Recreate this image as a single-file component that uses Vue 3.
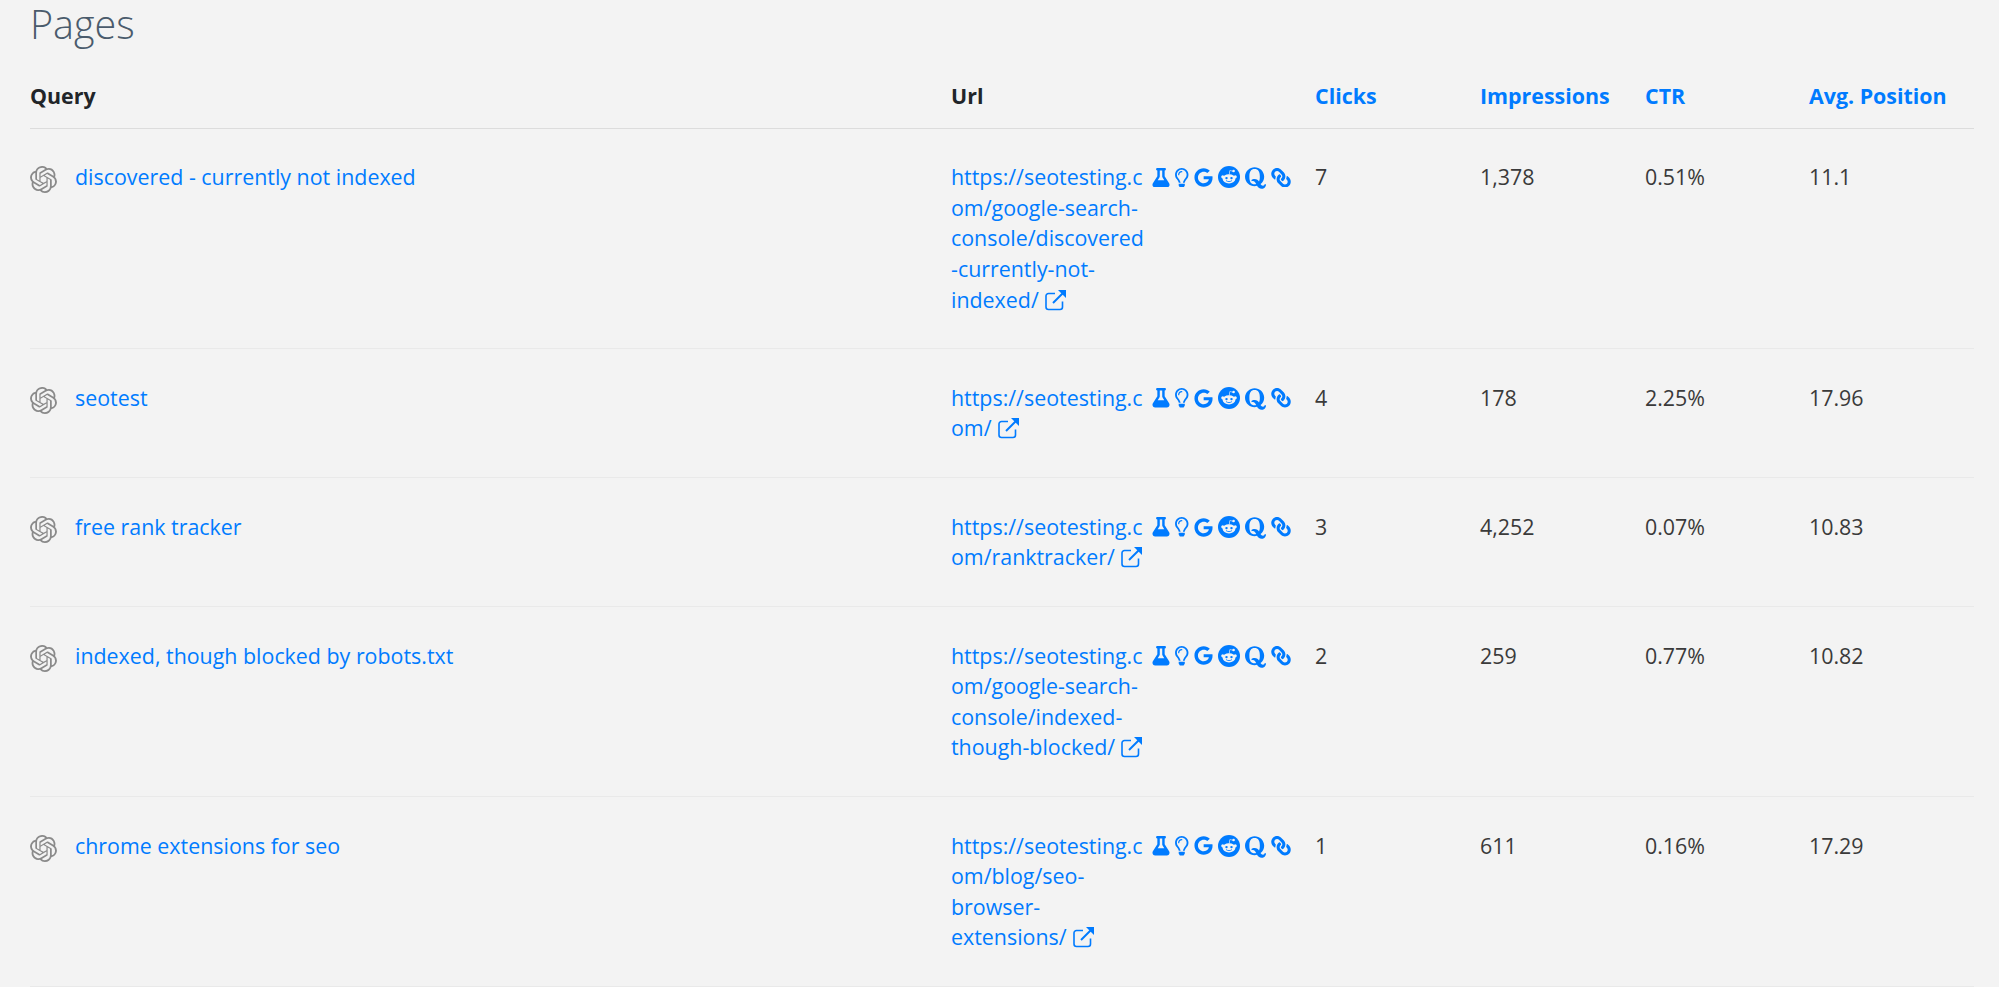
<script setup>
const rows = [
  { query: 'discovered - currently not indexed', url: ['https://seotesting.c', 'om/google-search-', 'console/discovered', '-currently-not-', 'indexed/'], clicks: '7', impressions: '1,378', ctr: '0.51%', pos: '11.1' },
  { query: 'seotest', url: ['https://seotesting.c', 'om/'], clicks: '4', impressions: '178', ctr: '2.25%', pos: '17.96' },
  { query: 'free rank tracker', url: ['https://seotesting.c', 'om/ranktracker/'], clicks: '3', impressions: '4,252', ctr: '0.07%', pos: '10.83' },
  { query: 'indexed, though blocked by robots.txt', url: ['https://seotesting.c', 'om/google-search-', 'console/indexed-', 'though-blocked/'], clicks: '2', impressions: '259', ctr: '0.77%', pos: '10.82' },
  { query: 'chrome extensions for seo', url: ['https://seotesting.c', 'om/blog/seo-', 'browser-', 'extensions/'], clicks: '1', impressions: '611', ctr: '0.16%', pos: '17.29' }
]
</script>

<template>
  <div class="page">
    <h1 class="title">Pages</h1>
    <div class="row head">
      <div>Query</div>
      <div>Url</div>
      <div class="sort">Clicks</div>
      <div class="sort">Impressions</div>
      <div class="sort">CTR</div>
      <div class="sort">Avg. Position</div>
    </div>
    <div v-for="r in rows" :key="r.query" class="row body">
      <div class="query">
        <svg class="ai" viewBox="0 0 24 24"><path fill="#8a8a8a" d="M22.2819 9.8211a5.9847 5.9847 0 0 0-.5157-4.9108 6.0462 6.0462 0 0 0-6.5098-2.9A6.0651 6.0651 0 0 0 4.9807 4.1818a5.9847 5.9847 0 0 0-3.9977 2.9 6.0462 6.0462 0 0 0 .7427 7.0966 5.98 5.98 0 0 0 .511 4.9107 6.051 6.051 0 0 0 6.5146 2.9001A5.9847 5.9847 0 0 0 13.2599 24a6.0557 6.0557 0 0 0 5.7718-4.2058 5.9894 5.9894 0 0 0 3.9977-2.9001 6.0557 6.0557 0 0 0-.7475-7.0729zm-9.022 12.6081a4.4755 4.4755 0 0 1-2.8764-1.0408l.1419-.0804 4.7783-2.7582a.7948.7948 0 0 0 .3927-.6813v-6.7369l2.02 1.1686a.071.071 0 0 1 .038.052v5.5826a4.504 4.504 0 0 1-4.4945 4.4944zm-9.6607-4.1254a4.4708 4.4708 0 0 1-.5346-3.0137l.142.0852 4.783 2.7582a.7712.7712 0 0 0 .7806 0l5.8428-3.3685v2.3324a.0804.0804 0 0 1-.0332.0615L9.74 19.9502a4.4992 4.4992 0 0 1-6.1408-1.6464zM2.3408 7.8956a4.485 4.485 0 0 1 2.3655-1.9728V11.6a.7664.7664 0 0 0 .3879.6765l5.8144 3.3543-2.0201 1.1685a.0757.0757 0 0 1-.071 0l-4.8303-2.7865A4.504 4.504 0 0 1 2.3408 7.872zm16.5963 3.8558L13.1038 8.364 15.1192 7.2a.0757.0757 0 0 1 .071 0l4.8303 2.7913a4.4944 4.4944 0 0 1-.6765 8.1042v-5.6772a.79.79 0 0 0-.407-.667zm2.0107-3.0231l-.142-.0852-4.7735-2.7818a.7759.7759 0 0 0-.7854 0L9.409 9.2297V6.8974a.0662.0662 0 0 1 .0284-.0615l4.8303-2.7866a4.4992 4.4992 0 0 1 6.6802 4.66zM8.3065 12.863l-2.02-1.1638a.0804.0804 0 0 1-.038-.0567V6.0742a4.4992 4.4992 0 0 1 7.3757-3.4537l-.142.0805L8.704 5.459a.7948.7948 0 0 0-.3927.6813zm1.0976-2.3654l2.602-1.4998 2.6069 1.4998v2.9994l-2.5974 1.4997-2.6067-1.4997Z"/></svg>
        <span class="link">{{ r.query }}</span>
      </div>
      <div class="urlcell">
        <div class="url link">
          <span v-for="(l, i) in r.url" :key="i" class="line">{{ l }}<svg v-if="i === r.url.length - 1" class="ext" viewBox="0 0 22 22"><path d="M17.5 12.5V18a2.5 2.5 0 0 1-2.5 2.5H3.5A2.5 2.5 0 0 1 1 18V7a2.5 2.5 0 0 1 2.5-2.5H10" fill="none" stroke="#007bff" stroke-width="1.6"/><path d="M8 14 19 3" fill="none" stroke="#007bff" stroke-width="2"/><path d="M13 1h8v8z" fill="#007bff"/></svg></span>
        </div>
        <div class="tools">
          <svg class="t flask" viewBox="0 0 448 512"><path d="M437.2 403.5L320 215V64h8c13.3 0 24-10.7 24-24V24c0-13.3-10.7-24-24-24H120c-13.3 0-24 10.7-24 24v16c0 13.3 10.7 24 24 24h8v151L10.8 403.5C-18.5 450.6 15.3 512 70.9 512h306.2c55.7 0 89.4-61.5 60.1-108.5zM137.9 320l48.2-77.6c3.7-5.2 5.8-11.6 5.8-18.4V64h64v160c0 6.9 2.2 13.2 5.8 18.4l48.2 77.6h-172z"/></svg>
          <svg class="t bulb" viewBox="0 0 352 512"><path d="M176 80c-52.94 0-96 43.06-96 96 0 8.84 7.16 16 16 16s16-7.16 16-16c0-35.3 28.72-64 64-64 8.84 0 16-7.16 16-16s-7.16-16-16-16zM96.06 459.17c0 3.15.93 6.22 2.68 8.84l24.51 36.84c2.97 4.46 7.97 7.14 13.32 7.14h78.85c5.36 0 10.36-2.68 13.32-7.14l24.51-36.84c1.74-2.62 2.67-5.7 2.68-8.84l.05-43.18H96.02l.04 43.18zM176 0C73.72 0 0 82.97 0 176c0 44.37 16.45 84.85 43.56 115.78 16.64 18.99 42.74 58.8 52.42 92.16v.06h48v-.12c-.01-4.77-.72-9.51-2.15-14.07-5.59-17.81-22.82-64.77-62.17-109.67-20.54-23.43-31.52-53.15-31.61-84.14-.2-73.64 59.67-128 127.95-128 70.58 0 128 57.42 128 128 0 30.97-11.24 60.85-31.65 84.14-39.11 44.61-56.42 91.47-62.1 109.46a47.507 47.507 0 0 0-2.22 14.3v.1h48v-.05c9.68-33.37 35.78-73.18 52.42-92.16C335.55 260.85 352 220.37 352 176 352 78.8 273.2 0 176 0z"/></svg>
          <svg class="t g" viewBox="0 0 488 512"><path d="M488 261.8C488 403.3 391.1 504 248 504 110.8 504 0 393.2 0 256S110.8 8 248 8c66.8 0 123 24.5 166.3 64.9l-67.5 64.9C258.5 52.6 94.3 116.6 94.3 256c0 86.5 69.1 156.6 153.7 156.6 98.2 0 135-70.4 140.8-106.9H248v-85.3h236.1c2.3 12.7 3.9 24.9 3.9 41.4z"/></svg>
          <svg class="t reddit" viewBox="0 0 24 24">
            <circle cx="12" cy="12" r="12"/>
            <g fill="#f3f3f3">
              <ellipse cx="12" cy="14" rx="7" ry="5"/>
              <circle cx="5.2" cy="11.8" r="1.7"/>
              <circle cx="18.8" cy="11.8" r="1.7"/>
              <circle cx="17" cy="5.5" r="1.4"/>
              <path d="M11.7 9.5 12.8 4.6l4 .8-.1.7-3.4-.7-.9 4.1z"/>
            </g>
            <circle cx="9.3" cy="13.2" r="1.3"/>
            <circle cx="14.7" cy="13.2" r="1.3"/>
            <path d="M8.8 15.9c1.8 1.5 4.6 1.5 6.4 0" fill="none" stroke="#007bff" stroke-width=".9"/>
          </svg>
          <svg class="t q" viewBox="7 32 434 448"><path d="M440.5 386.7h-29.3c-1.5 13.5-10.5 30.8-33 30.8-20.5 0-35.3-14.2-49.5-35.8 44.2-34.2 74.7-87.8 74.7-153C403.5 111.2 306.8 32 205 32 105.3 32 7.3 111.7 7.3 228.7c0 134.1 131.3 221.6 249 189C276 451.3 302 480 351.5 480c81.8 0 90.8-75.3 89-93.3zM297 329.2C277.5 300 253.3 277 205.5 277c-30.5 0-54.3 10-69 22.8l12.2 24.3c6.2-3 13-4 19.8-4 35.5 0 53.7 30.8 69.2 61.3-10 3-20.7 4.2-32.7 4.2-75 0-107.5-53-107.5-156.7C97.5 124.5 130 71 205 71c76.2 0 108.7 53.5 108.7 157.7.1 41.8-5.4 75.6-16.7 100.5z"/></svg>
          <svg class="t chain" viewBox="0 0 512 512"><path d="M326.612 185.391c59.747 59.809 58.927 155.698.36 214.59-.11.12-.24.25-.36.37l-67.2 67.2c-59.27 59.27-155.699 59.262-214.96 0-59.27-59.26-59.27-155.7 0-214.96l37.106-37.106c9.84-9.84 26.786-3.3 27.294 10.606.648 17.722 3.826 35.527 9.69 52.721 1.986 5.822.567 12.262-3.783 16.612l-13.087 13.087c-28.026 28.026-28.905 73.66-1.155 101.96 28.024 28.579 74.086 28.749 102.325.51l67.2-67.19c28.191-28.191 28.073-73.757 0-101.83-3.701-3.694-7.429-6.564-10.341-8.569a16.037 16.037 0 0 1-6.947-12.606c-.396-10.567 3.348-21.456 11.698-29.806l21.054-21.055c5.521-5.521 14.182-6.199 20.584-1.731a152.482 152.482 0 0 1 20.522 17.197zM467.547 44.449c-59.261-59.262-155.69-59.27-214.96 0l-67.2 67.2c-.12.12-.25.25-.36.37-58.566 58.892-59.387 154.781.36 214.59a152.454 152.454 0 0 0 20.521 17.196c6.402 4.468 15.064 3.789 20.584-1.731l21.054-21.055c8.35-8.35 12.094-19.239 11.698-29.806a16.037 16.037 0 0 0-6.947-12.606c-2.912-2.005-6.64-4.875-10.341-8.569-28.073-28.073-28.191-73.639 0-101.83l67.2-67.19c28.239-28.239 74.3-28.069 102.325.51 27.75 28.3 26.872 73.934-1.155 101.96l-13.087 13.087c-4.35 4.35-5.769 10.79-3.783 16.612 5.864 17.194 9.042 34.999 9.69 52.721.509 13.906 17.454 20.446 27.294 10.606l37.106-37.106c59.271-59.259 59.271-155.699.001-214.959z"/></svg>
        </div>
      </div>
      <div>{{ r.clicks }}</div>
      <div>{{ r.impressions }}</div>
      <div>{{ r.ctr }}</div>
      <div>{{ r.pos }}</div>
    </div>
  </div>
</template>

<style>
html, body { margin: 0; background: #f3f3f3; overflow: hidden; }
</style>

<style scoped>
.page {
  box-sizing: border-box;
  width: 1999px;
  height: 987px;
  padding: 0 25px 0 30px;
  overflow: hidden;
  background: #f3f3f3;
  font-family: "Open Sans", sans-serif;
  font-size: 21.4px;
  line-height: 30.6px;
  color: #3a3a3a;
}
.title {
  margin: 0;
  font-size: 39.5px;
  line-height: 48px;
  font-weight: 300;
  color: #4a5b6c;
}
.row {
  display: grid;
  grid-template-columns: 921px 364px 165px 165px 164px 165px;
}
.head {
  padding: 33px 0 16px;
  font-weight: 700;
  color: #212529;
  border-bottom: 1px solid #dcdcdc;
}
.sort { color: #007bff; }
.body {
  padding: 33.6px 0 33.1px;
  border-bottom: 1px solid #e9e9e9;
}
.query { display: flex; align-items: flex-start; }
.ai { width: 27px; height: 27px; margin: 4px 18px 0 0; flex: none; }
.link { color: #007bff; }
.urlcell { display: flex; align-items: flex-start; }
.url { width: 201px; flex: none; }
.line { display: block; white-space: nowrap; }
.ext { width: 22px; height: 22px; margin-left: 6px; vertical-align: -3px; }
.tools { display: flex; align-items: center; gap: 5px; height: 30.6px; }
.t { height: 19.5px; fill: #007bff; flex: none; }
.flask { width: 18px; }
.bulb { width: 13.5px; }
.g { width: 19px; height: 19px; }
.reddit { width: 22px; height: 22px; }
.q { width: 21px; height: 22px; margin-top: 2px; }
.chain { width: 20px; transform: scaleX(-1); }
</style>
